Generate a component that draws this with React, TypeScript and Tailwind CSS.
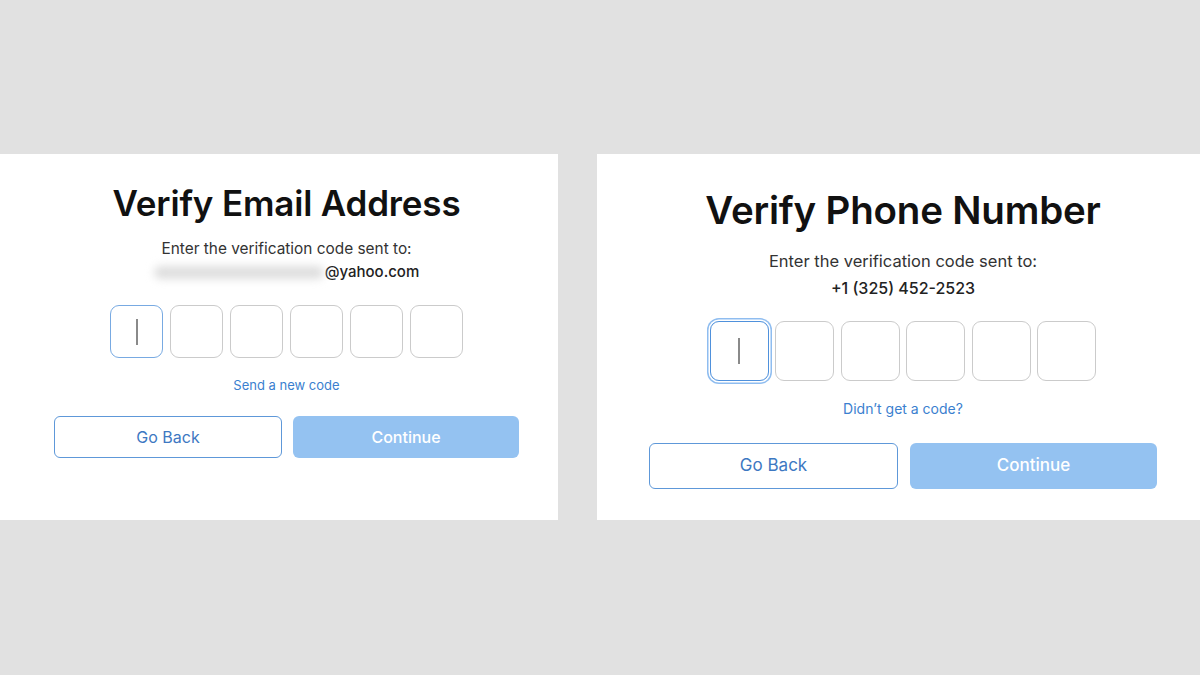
const FONT = "font-['Inter','Liberation_Sans',sans-serif]"

function CodeBoxes({ size, gap, focusRing }: { size: string; gap: string; focusRing: boolean }) {
  return (
    <div className={`flex justify-center ${gap}`}>
      {[0, 1, 2, 3, 4, 5].map(i => (
        <div
          key={i}
          className={
            i === 0
              ? focusRing
                ? `${size} rounded-[9px] border-[1.5px] border-[#4f91dc] shadow-[0_0_0_1.5px_#ffffff,0_0_0_3px_#8fbdf0] flex items-center justify-center`
                : `${size} rounded-[9px] border-[1.5px] border-[#78aae2] flex items-center justify-center`
              : `${size} rounded-[9px] border-[1.5px] border-[#cbcbcb]`
          }
        >
          {i === 0 && <div className="w-[2px] h-[26px] bg-[#8a8a8a]" />}
        </div>
      ))}
    </div>
  )
}

export default function App() {
  return (
    <div className={`w-[1200px] h-[675px] bg-[#e1e1e1] pt-[154px] flex gap-[39px] ${FONT}`}>
      {/* Email card */}
      <div className="w-[558px] h-[366px] bg-white pl-[54px] pt-[29px]">
        <div className="w-[465px] flex flex-col items-center">
          <h1 className="text-[35px] leading-[40px] font-semibold tracking-[-0.005em] text-[#111]">
            Verify Email Address
          </h1>
          <p className="mt-[15px] text-[15.4px] leading-[22px] text-[#333]">Enter the verification code sent to:</p>
          <div className="flex items-center h-[24px] text-[15px] font-medium text-[#222]">
            <span className="w-[170px] h-[13px] mr-[1px] rounded-full bg-[#dedede] blur-[4px]" />
            <span>@yahoo.com</span>
          </div>
          <div className="mt-[21px]">
            <CodeBoxes size="w-[53px] h-[53px]" gap="gap-[7px]" focusRing={false} />
          </div>
          <a className="mt-[17px] text-[13px] leading-[20px] text-[#3b7fcf]">Send a new code</a>
          <div className="mt-[21px] w-full flex gap-[11px]">
            <button className="flex-1 h-[42px] rounded-[6px] border-[1.5px] border-[#5e98d9] bg-white text-[16px] text-[#3d78c2]">
              Go Back
            </button>
            <button className="flex-1 h-[42px] rounded-[6px] bg-[#94c2f1] text-[16px] font-medium text-white">
              Continue
            </button>
          </div>
        </div>
      </div>

      {/* Phone card */}
      <div className="flex-1 h-[366px] bg-white pl-[52px] pt-[33px]">
        <div className="w-[508px] flex flex-col items-center">
          <h1 className="text-[38.5px] leading-[46px] font-semibold tracking-[-0.005em] text-[#111]">
            Verify Phone Number
          </h1>
          <p className="mt-[16px] text-[16.5px] leading-[24px] text-[#333]">Enter the verification code sent to:</p>
          <p className="mt-[3px] text-[16px] leading-[24px] font-medium text-[#222]">+1 (325) 452-2523</p>
          <div className="mt-[21px]">
            <CodeBoxes size="w-[59px] h-[60px]" gap="gap-[6.5px]" focusRing={true} />
          </div>
          <a className="mt-[18px] text-[14px] leading-[20px] text-[#3b7fcf]">Didn’t get a code?</a>
          <div className="mt-[24px] w-full flex gap-[12px]">
            <button className="flex-1 h-[46px] rounded-[6px] border-[1.5px] border-[#5e98d9] bg-white text-[17px] text-[#3d78c2]">
              Go Back
            </button>
            <button className="flex-1 h-[46px] rounded-[6px] bg-[#94c2f1] text-[17px] font-medium text-white">
              Continue
            </button>
          </div>
        </div>
      </div>
    </div>
  )
}
